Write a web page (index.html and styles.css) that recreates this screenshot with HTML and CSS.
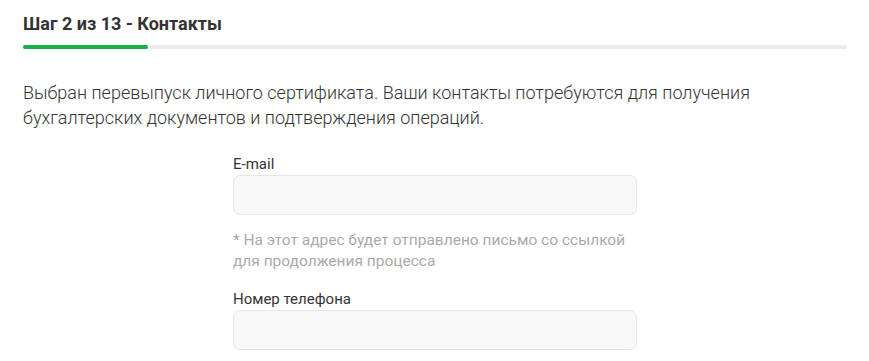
FILE: index.html
```html
<!DOCTYPE html>
<html lang="ru">
<head>
    <meta charset="UTF-8">
    <meta name="viewport" content="width=device-width, initial-scale=1.0">
    <title>Контакты</title>
    <link rel="stylesheet" href="styles.css">
</head>
<body>
    <div class="container">
        <div class="step-header">
            <h1>Шаг 2 из 13 - Контакты</h1>
            <div class="progress">
                <div class="progress-bar" style="width: 15.2%;"></div>
            </div>
        </div>
        <p class="intro">Выбран перевыпуск личного сертификата. Ваши контакты потребуются для получения бухгалтерских документов и подтверждения операций.</p>
        <form class="contact-form">
            <div class="form-group">
                <label for="email">E-mail</label>
                <input type="email" id="email" name="email">
                <div class="hint">* На этот адрес будет отправлено письмо со ссылкой для продолжения процесса</div>
            </div>
            <div class="form-group">
                <label for="phone">Номер телефона</label>
                <input type="tel" id="phone" name="phone">
            </div>
        </form>
    </div>
</body>
</html>
```

FILE: styles.css
```css
body {
    font-family: Roboto, "Liberation Sans", sans-serif;
    background-color: #fff;
    margin: 0;
    padding: 0;
}
.container {
    width: 824px;
    padding: 13px 22px 0 23px;
}
.step-header h1 {
    margin: 0;
    font-size: 18px;
    font-weight: bold;
    color: #333;
    line-height: 22px;
}
.progress {
    margin-top: 10px;
    height: 4px;
    background-color: #e9ebed;
    border-radius: 2px;
}
.progress-bar {
    height: 100%;
    background-color: #17b14c;
    border-radius: 2px;
}
.intro {
    margin: 31px 0 0;
    font-size: 18px;
    font-weight: 300;
    line-height: 25px;
    color: #333;
}
.contact-form {
    width: 404px;
    margin: 25px auto 0;
}
.form-group {
    margin-bottom: 18px;
}
.form-group label {
    display: block;
    font-size: 15px;
    line-height: 18px;
    color: #333;
    margin-bottom: 2px;
}
.form-group input {
    display: block;
    box-sizing: border-box;
    width: 100%;
    height: 40px;
    padding: 0 12px;
    background-color: #f8f8f8;
    border: 1px solid #e6e6e6;
    border-radius: 7px;
    font-family: inherit;
    font-size: 15px;
}
.hint {
    margin-top: 15px;
    font-size: 15.5px;
    line-height: 21px;
    color: #aaa;
}
```
